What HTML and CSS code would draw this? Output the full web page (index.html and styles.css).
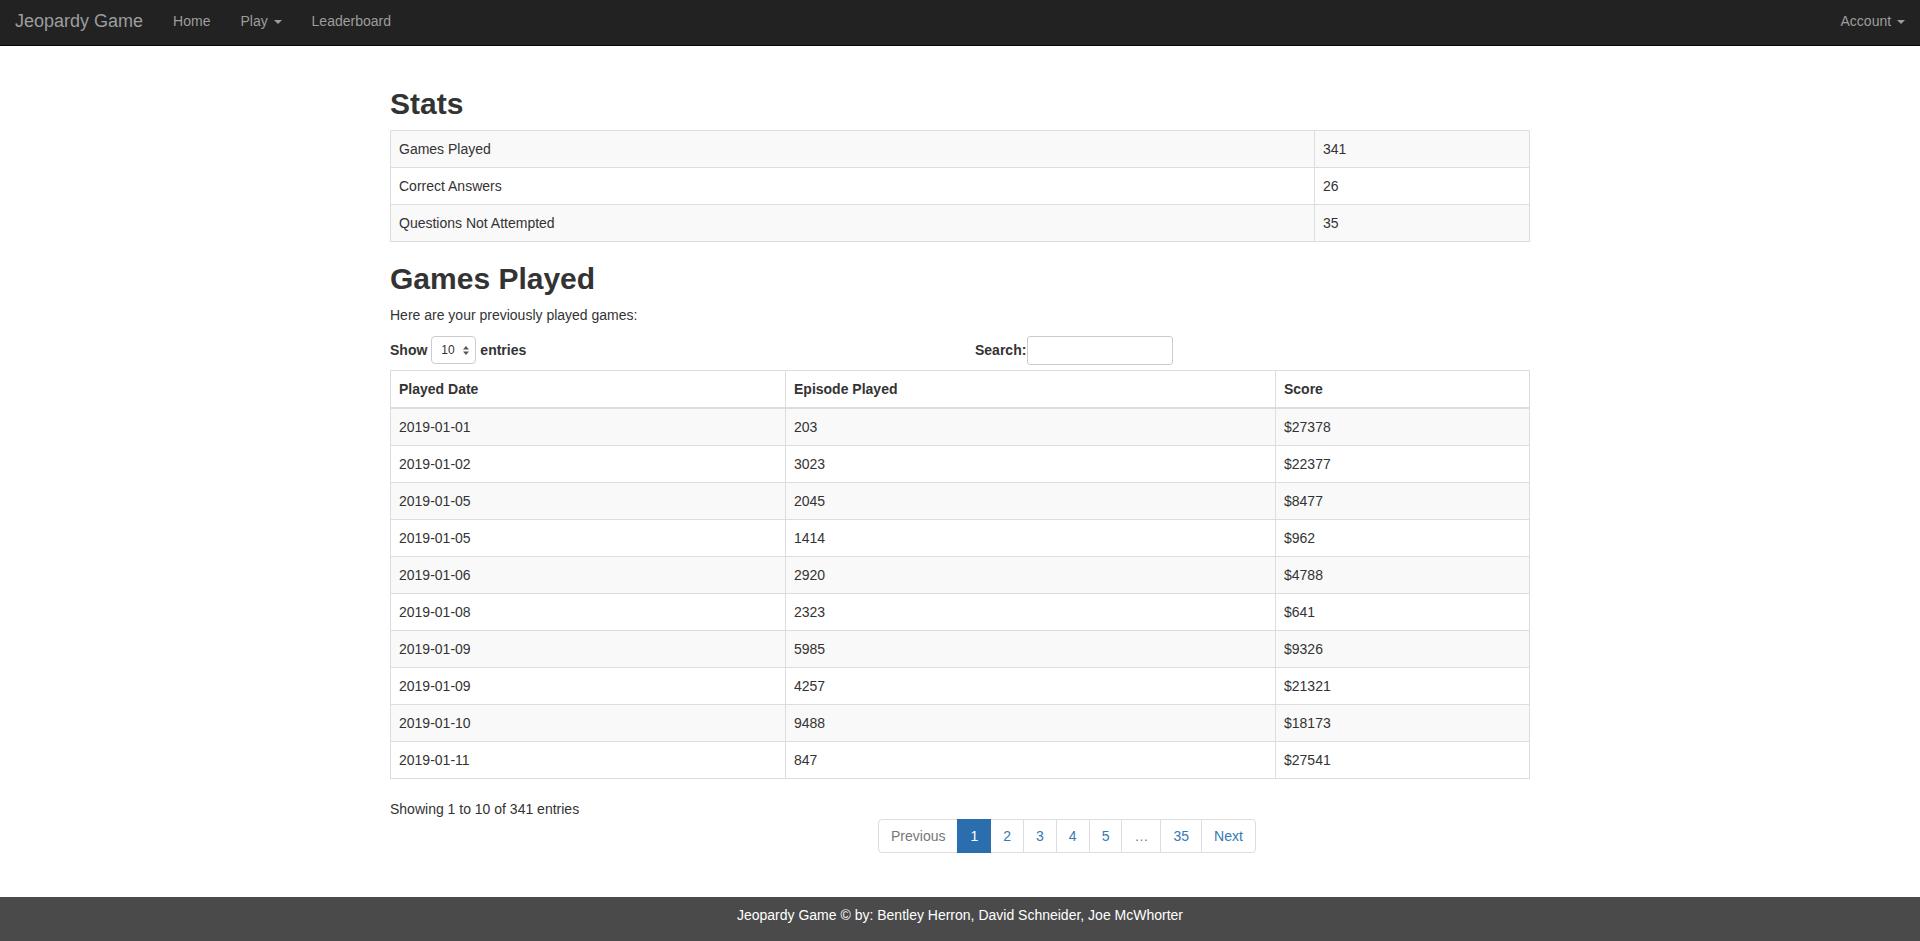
FILE: index.html
```html
<!DOCTYPE html>
<html lang="en">
<head>
<meta charset="utf-8">
<title>Jeopardy Game - Stats</title>
<link rel="stylesheet" href="styles.css">
</head>
<body>
<nav class="navbar">
  <div class="nav-left">
    <a class="brand" href="#">Jeopardy Game</a>
    <a class="nav-link" href="#">Home</a>
    <a class="nav-link" href="#">Play <span class="caret"></span></a>
    <a class="nav-link" href="#">Leaderboard</a>
  </div>
  <div class="nav-right">
    <a class="nav-link" href="#">Account <span class="caret"></span></a>
  </div>
</nav>

<main class="container">
  <h2 class="heading">Stats</h2>
  <table class="table stats-table">
    <colgroup><col class="stats-c1"><col></colgroup>
    <tbody>
      <tr><td>Games Played</td><td>341</td></tr>
      <tr><td>Correct Answers</td><td>26</td></tr>
      <tr><td>Questions Not Attempted</td><td>35</td></tr>
    </tbody>
  </table>

  <h2 class="heading">Games Played</h2>
  <p class="lead-text">Here are your previously played games:</p>

  <div class="dt-controls">
    <div class="dt-length">
      <span class="bold">Show</span>
      <span class="select-wrap">
        <select class="dt-select"><option>10</option><option>25</option><option>50</option><option>100</option></select>
        <svg class="select-arrows" width="6" height="9" viewBox="0 0 6 9"><path d="M0 3.5 L3 0 L6 3.5 Z M0 5.5 L3 9 L6 5.5 Z" fill="#555"/></svg>
      </span>
      <span class="bold">entries</span>
    </div>
    <div class="dt-filter">
      <label class="bold" for="search">Search:</label><input id="search" class="search-input" type="search">
    </div>
  </div>

  <table class="table games-table">
    <colgroup><col class="g-c1"><col class="g-c2"><col></colgroup>
    <thead>
      <tr><th>Played Date</th><th>Episode Played</th><th>Score</th></tr>
    </thead>
    <tbody>
      <tr><td>2019-01-01</td><td>203</td><td>$27378</td></tr>
      <tr><td>2019-01-02</td><td>3023</td><td>$22377</td></tr>
      <tr><td>2019-01-05</td><td>2045</td><td>$8477</td></tr>
      <tr><td>2019-01-05</td><td>1414</td><td>$962</td></tr>
      <tr><td>2019-01-06</td><td>2920</td><td>$4788</td></tr>
      <tr><td>2019-01-08</td><td>2323</td><td>$641</td></tr>
      <tr><td>2019-01-09</td><td>5985</td><td>$9326</td></tr>
      <tr><td>2019-01-09</td><td>4257</td><td>$21321</td></tr>
      <tr><td>2019-01-10</td><td>9488</td><td>$18173</td></tr>
      <tr><td>2019-01-11</td><td>847</td><td>$27541</td></tr>
    </tbody>
  </table>

  <div class="dt-info">Showing 1 to 10 of 341 entries</div>
  <ul class="pagination">
    <li class="disabled"><a href="#">Previous</a></li>
    <li class="active"><a href="#">1</a></li>
    <li><a href="#">2</a></li>
    <li><a href="#">3</a></li>
    <li><a href="#">4</a></li>
    <li><a href="#">5</a></li>
    <li class="disabled ellipsis"><a href="#">…</a></li>
    <li><a href="#">35</a></li>
    <li><a href="#">Next</a></li>
  </ul>
</main>

<footer class="footer">Jeopardy Game © by: Bentley Herron, David Schneider, Joe McWhorter</footer>
</body>
</html>
```

FILE: styles.css
```css
* { box-sizing: border-box; }

html, body {
  margin: 0;
  padding: 0;
}

body {
  font-family: "Liberation Sans", Arial, Helvetica, sans-serif;
  font-size: 14px;
  line-height: 20px;
  color: #333;
  background: #fff;
}

a { text-decoration: none; }

/* Navbar */
.navbar {
  height: 46px;
  background: #222;
  border-bottom: 1px solid #080808;
  display: flex;
  justify-content: space-between;
  align-items: flex-start;
  margin-bottom: 21px;
}

.nav-left, .nav-right {
  display: flex;
  align-items: flex-start;
}

.brand {
  display: block;
  font-size: 18px;
  line-height: 20px;
  padding: 11px 15px 14px 15px;
  color: #9d9d9d;
}

.nav-link {
  display: block;
  padding: 11px 15px 14px 15px;
  color: #9d9d9d;
  font-size: 14px;
  line-height: 20px;
}

.caret {
  display: inline-block;
  width: 0;
  height: 0;
  margin-left: 2px;
  vertical-align: middle;
  border-top: 4px solid #9d9d9d;
  border-left: 4px solid transparent;
  border-right: 4px solid transparent;
}

/* Container */
.container {
  display: flow-root;
  width: 1140px;
  margin: 0 auto;
  padding-bottom: 44px;
}

.heading {
  font-size: 30px;
  line-height: 33px;
  font-weight: bold;
  margin: 20px 0 10px 0;
  color: #333;
}

.lead-text {
  margin: 0 0 10px 0;
}

.bold { font-weight: bold; }

/* Tables */
.table {
  width: 100%;
  border-collapse: collapse;
  border-spacing: 0;
  table-layout: fixed;
  border: 1px solid #ddd;
}

.table td, .table th {
  padding: 8px;
  line-height: 20px;
  text-align: left;
  border: 1px solid #ddd;
  vertical-align: top;
}

.table th {
  font-weight: bold;
  border-bottom: 2px solid #ddd;
}

.table tbody tr:nth-child(odd) { background: #f9f9f9; }

.stats-table { margin: 0 0 20px 0; }
.stats-c1 { width: 924px; }

.games-table { margin: 5px 0 0 0; }
.g-c1 { width: 395px; }
.g-c2 { width: 490px; }

/* DataTables controls */
.dt-controls {
  display: grid;
  grid-template-columns: 1fr 1fr;
  column-gap: 30px;
  height: 30px;
}

.dt-length {
  display: flex;
  align-items: center;
  gap: 4px;
}

.select-wrap {
  position: relative;
  display: inline-block;
  height: 28px;
}

.dt-select {
  -webkit-appearance: none;
  appearance: none;
  width: 45px;
  height: 28px;
  padding: 0 0 0 9px;
  font-family: "Liberation Sans", Arial, sans-serif;
  font-size: 12px;
  color: #333;
  background: #fff;
  border: 1px solid #ccc;
  border-radius: 4px;
  margin: 0;
}

.select-arrows {
  position: absolute;
  right: 7px;
  top: 10px;
  pointer-events: none;
}

.dt-filter {
  display: flex;
  align-items: center;
}

.search-input {
  width: 146px;
  height: 29px;
  margin: 0 0 0 1px;
  border: 1px solid #ccc;
  border-radius: 3px;
  padding: 4px 6px;
  font-family: "Liberation Sans", Arial, sans-serif;
  font-size: 12px;
}

.dt-info {
  margin-top: 20px;
}

/* Pagination */
.pagination {
  display: flex;
  list-style: none;
  padding: 0;
  margin: 0 0 0 488px;
}

.pagination li a {
  display: block;
  padding: 6px 12px;
  line-height: 20px;
  color: #337ab7;
  background: #fff;
  border: 1px solid #ddd;
  margin-left: -1px;
}

.pagination li:first-child a {
  margin-left: 0;
  border-radius: 4px 0 0 4px;
}

.pagination li:last-child a {
  border-radius: 0 4px 4px 0;
}

.pagination li.disabled a { color: #777; }
.pagination li.ellipsis a { color: #777; padding: 6px 12px; }

.pagination li.active a {
  background: #2a6ead;
  border-color: #2a6ead;
  color: #fff;
  position: relative;
}

/* Footer */
.footer {
  background: #4a4a4a;
  color: #fff;
  text-align: center;
  padding: 8px 0 16px 0;
  line-height: 20px;
}
```
